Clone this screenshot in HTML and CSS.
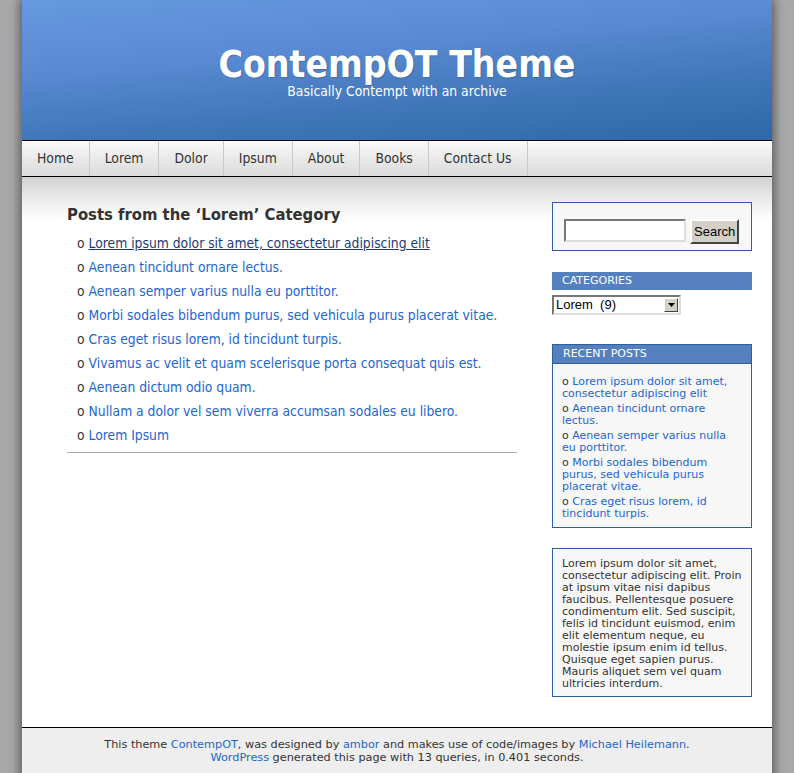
FILE: index.html
```html
<!DOCTYPE html>
<html>
<head>
<meta charset="utf-8">
<title>ContempOT Theme</title>
<link rel="stylesheet" href="styles.css">
</head>
<body>
<div class="page">
  <header class="header">
    <h1 class="site-title">ContempOT Theme</h1>
    <div class="site-desc">Basically Contempt with an archive</div>
  </header>
  <nav class="nav">
    <a class="nav-item" href="#">Home</a>
    <a class="nav-item" href="#">Lorem</a>
    <a class="nav-item" href="#">Dolor</a>
    <a class="nav-item" href="#">Ipsum</a>
    <a class="nav-item" href="#">About</a>
    <a class="nav-item" href="#">Books</a>
    <a class="nav-item" href="#">Contact Us</a>
  </nav>
  <div class="content">
    <main class="main">
      <h2 class="page-heading">Posts from the ‘Lorem’ Category</h2>
      <ul class="post-list">
        <li><a class="active" href="#">Lorem ipsum dolor sit amet, consectetur adipiscing elit</a></li>
        <li><a href="#">Aenean tincidunt ornare lectus.</a></li>
        <li><a href="#">Aenean semper varius nulla eu porttitor.</a></li>
        <li><a href="#">Morbi sodales bibendum purus, sed vehicula purus placerat vitae.</a></li>
        <li><a href="#">Cras eget risus lorem, id tincidunt turpis.</a></li>
        <li><a href="#">Vivamus ac velit et quam scelerisque porta consequat quis est.</a></li>
        <li><a href="#">Aenean dictum odio quam.</a></li>
        <li><a href="#">Nullam a dolor vel sem viverra accumsan sodales eu libero.</a></li>
        <li><a href="#">Lorem Ipsum</a></li>
      </ul>
      <hr class="rule">
    </main>
    <aside class="sidebar">
      <div class="box search-box">
        <input class="search-input" type="text">
        <button class="search-btn" type="button">Search</button>
      </div>
      <div class="widget-title">Categories</div>
      <div class="select">
        <span class="select-text">Lorem&nbsp;&nbsp;(9)</span>
        <span class="select-arrow"><svg width="7" height="4" viewBox="0 0 7 4"><path d="M0 0h7L3.5 4z" fill="#000"/></svg></span>
      </div>
      <div class="box recent">
        <div class="widget-title inbox">Recent Posts</div>
        <ul class="recent-list">
          <li><a href="#">Lorem ipsum dolor sit amet, consectetur adipiscing elit</a></li>
          <li><a href="#">Aenean tincidunt ornare lectus.</a></li>
          <li><a href="#">Aenean semper varius nulla eu porttitor.</a></li>
          <li><a href="#">Morbi sodales bibendum purus, sed vehicula purus placerat vitae.</a></li>
          <li><a href="#">Cras eget risus lorem, id tincidunt turpis.</a></li>
        </ul>
      </div>
      <div class="box text-box">
        Lorem ipsum dolor sit amet, consectetur adipiscing elit. Proin at ipsum vitae nisi dapibus faucibus. Pellentesque posuere condimentum elit. Sed suscipit, felis id tincidunt euismod, enim elit elementum neque, eu molestie ipsum enim id tellus. Quisque eget sapien purus. Mauris aliquet sem vel quam ultricies interdum.
      </div>
    </aside>
  </div>
  <footer class="footer">
    <p>This theme <a href="#">ContempOT</a>, was designed by <a href="#">ambor</a> and makes use of code/images by <a href="#">Michael Heilemann</a>.<br>
    <a href="#">WordPress</a> generated this page with 13 queries, in 0.401 seconds.</p>
  </footer>
</div>
</body>
</html>
```

FILE: styles.css
```css
html, body {
  margin: 0;
  padding: 0;
}
body {
  background: #a9a9a9;
  font-family: "DejaVu Sans Condensed", "DejaVu Sans", sans-serif;
  color: #333;
}
a { text-decoration: none; color: #2266cc; }

.page {
  width: 750px;
  margin: 0 auto;
  background: #fff;
  box-shadow: 0 0 10px 2px #555;
}

.header {
  height: 140px;
  background: linear-gradient(175deg, #6699e0 0%, #5a8ad4 35%, #3f76b8 70%, #2e68a8 100%);
  text-align: center;
  color: #fff;
  overflow: hidden;
}
.site-title {
  margin: 0;
  padding-top: 46px;
  font-family: "DejaVu Sans Condensed", "DejaVu Sans", sans-serif;
  font-size: 37px;
  line-height: 38px;
  font-weight: bold;
  text-shadow: 1px 1px 1px rgba(0,0,0,0.15);
}
.site-desc {
  font-size: 13.8px;
  line-height: 14px;
  margin-top: 0;
  font-family: "DejaVu Sans Condensed", sans-serif;
}

.nav {
  display: flex;
  height: 35px;
  border-top: 1px solid #000;
  border-bottom: 1px solid #000;
  background: linear-gradient(#fafafa, #e6e6e6 60%, #dcdcdc);
}
.nav-item {
  padding: 0 15px;
  line-height: 35px;
  font-size: 13.8px;
  color: #333;
  border-right: 1px solid #c8c8c8;
}

.content {
  display: flex;
  background: linear-gradient(#d2d2d2, #fff 42px);
}
.main {
  width: 450px;
  margin-left: 45px;
  padding-top: 28px;
}
.page-heading {
  margin: 0 0 6px;
  font-family: "DejaVu Sans Condensed", "DejaVu Sans", sans-serif;
  font-size: 16.5px;
  line-height: 20px;
  color: #333;
}
.post-list {
  list-style: none;
  margin: 0;
  padding: 0 0 0 10px;
  font-size: 13.75px;
}
.post-list li {
  line-height: 24px;
}
.post-list li::before {
  content: "o";
  color: #333;
  margin-right: 4px;
}
.post-list a.active {
  color: #1d3c6e;
  text-decoration: underline;
}
.rule {
  border: 0;
  border-top: 1px solid #aaa;
  margin: 5px 0 0;
}

.sidebar {
  width: 200px;
  margin-left: 35px;
  padding-top: 25px;
  padding-bottom: 30px;
  font-family: "DejaVu Sans", sans-serif;
  font-size: 11px;
}
.box {
  border: 1px solid #2e5e9e;
  background: #f7f7f7;
}
.search-box {
  display: flex;
  align-items: flex-start;
  height: 47px;
  box-sizing: content-box;
  padding: 0 11px;
  gap: 4px;
}
.search-input {
  width: 118px;
  height: 19px;
  padding: 0;
  margin: 16px 0 0;
  border: 2px solid;
  border-color: #777 #ddd #ddd #777;
  background: #fff;
}
.search-btn {
  height: 25px;
  padding: 0 2px;
  margin: 16px 0 0;
  font-family: "Liberation Sans", sans-serif;
  font-size: 13px;
  background: #d4d0c8;
  color: #000;
  border: 2px solid;
  border-color: #fff #444 #444 #fff;
}
.widget-title {
  margin-top: 21px;
  height: 18px;
  line-height: 18px;
  background: #5580c0;
  color: #fff;
  font-size: 11px;
  text-transform: uppercase;
  padding-left: 10px;
}
.widget-title.inbox {
  margin-top: 0;
  border-bottom: 1px solid #2e5e9e;
}
.select {
  display: flex;
  margin-top: 5px;
  width: 125px;
  height: 16px;
  border: 2px solid;
  border-color: #777 #ddd #ddd #777;
  background: #fff;
  font-family: "Liberation Sans", sans-serif;
  font-size: 13px;
  line-height: 16px;
  color: #000;
}
.select-text {
  flex: 1;
  padding-left: 2px;
}
.select-arrow {
  width: 14px;
  height: 14px;
  margin: 1px;
  box-sizing: border-box;
  background: #d4d0c8;
  border: 1px solid;
  border-color: #fff #444 #444 #fff;
  display: flex;
  align-items: center;
  justify-content: center;
}
.recent {
  margin-top: 29px;
}
.recent-list {
  list-style: none;
  margin: 0;
  padding: 12px 9px 7px;
  line-height: 12px;
}
.recent-list li {
  margin-bottom: 3px;
}
.recent-list li:last-child {
  margin-bottom: 0;
}
.recent-list li::before {
  content: "o ";
  color: #333;
}
.text-box {
  margin-top: 20px;
  padding: 9px 9px 6px;
  line-height: 12px;
  color: #333;
}

.footer {
  border-top: 1px solid #000;
  background: #eee;
  text-align: center;
  font-family: "DejaVu Sans", sans-serif;
  font-size: 11.25px;
  line-height: 13.2px;
  padding: 10px 0 20px;
}
.footer p { margin: 0; }
```
